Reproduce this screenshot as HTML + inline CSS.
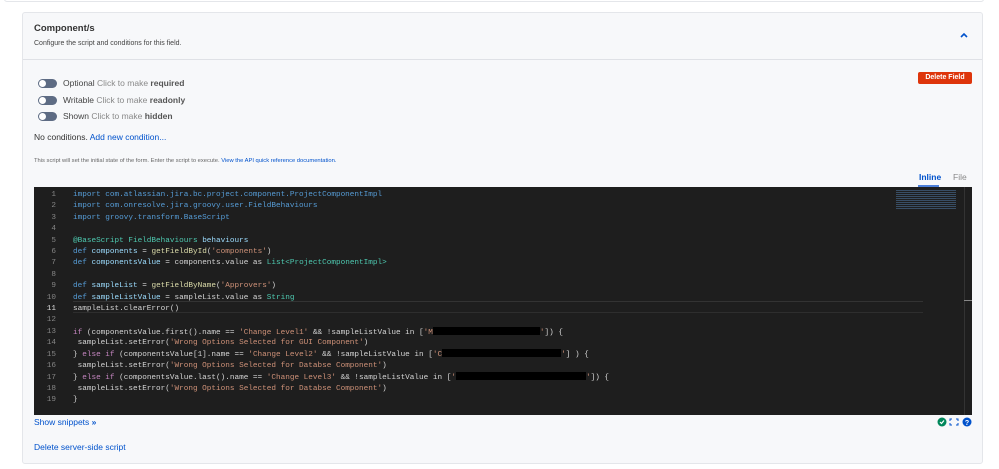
<!DOCTYPE html>
<html><head><style>
*{box-sizing:border-box;margin:0;padding:0}
body{width:999px;height:469px;background:#fff;font-family:"Liberation Sans",sans-serif;position:relative;overflow:hidden}
.outer{position:absolute;left:4px;top:-2px;width:980px;height:4px;border:1px solid #e4e6ea;border-top:none;border-radius:0 0 3px 3px}
.card{position:absolute;left:22px;top:12px;width:961px;height:452px;background:#f7f8fa;border:1px solid #e4e6ea;border-radius:3px}
.hd{height:47px;border-bottom:1px solid #dfe1e6}
.abs{position:absolute}
.t1{left:11px;top:10px;font-size:9.5px;font-weight:bold;color:#333}
.t2{left:11px;top:27px;font-size:7px;color:#444}
.tg{position:absolute;left:15px;width:19px;height:9px;border-radius:5px;background:#5e6c84}
.tg::after{content:"";position:absolute;left:1px;top:1px;width:7px;height:7px;border-radius:50%;background:#fff}
.lb{position:absolute;left:40px;font-size:8.5px;color:#444}
.lb span{color:#888}.lb b{color:#555}
a{color:#0052cc;text-decoration:none}
.ed{position:absolute;left:11px;top:174px;width:938px;height:228px;background:#1e1e1e;font-family:"Liberation Mono",monospace;font-size:7.7px;line-height:11.4px;color:#d4d4d4}
.ln{position:absolute;left:0;width:22px;text-align:right;color:#858585}
.cd{position:absolute;left:39px;white-space:pre}
.cd div{height:11.4px;overflow:visible}
.k{color:#569cd6}.s{color:#ce9178}.v{color:#9cdcfe}.ty{color:#4ec9b0}.f{color:#dcdcaa}.p{color:#c586c0}
.r{display:inline-block;background:#000;height:8px;vertical-align:-1px}
</style></head><body>
<div class="outer"></div>
<div class="card">
<div class="hd"></div>
<div class="abs t1">Component/s</div>
<div class="abs t2">Configure the script and conditions for this field.</div>
<svg class="abs" style="left:936px;top:18px" width="10" height="8"><path d="M2 6 L5 3 L8 6" stroke="#0052cc" stroke-width="1.6" fill="none"/></svg>
<div class="abs" style="left:895px;top:59px;width:54px;height:12px;background:#de350b;border-radius:2px;color:#fff;font-size:7px;font-weight:bold;text-align:center;line-height:12px">Delete Field</div>
<div class="tg" style="top:66px"></div><div class="lb" style="top:65px">Optional <span>Click to make </span><b>required</b></div>
<div class="tg" style="top:83px"></div><div class="lb" style="top:82px">Writable <span>Click to make </span><b>readonly</b></div>
<div class="tg" style="top:99px"></div><div class="lb" style="top:98px">Shown <span>Click to make </span><b>hidden</b></div>
<div class="abs" style="left:11px;top:119px;font-size:8.5px;color:#333">No conditions. <a>Add new condition...</a></div>
<div class="abs" style="left:11px;top:145px;font-size:5.8px;color:#666">This script will set the initial state of the form. Enter the script to execute. <a>View the API quick reference documentation.</a></div>
<div class="abs" style="left:896px;top:159px;font-size:8.5px;color:#0052cc;font-weight:bold">Inline</div>
<div class="abs" style="left:895px;top:172px;width:21px;height:2px;background:#4c7fd9"></div>
<div class="abs" style="left:930px;top:159px;font-size:8.5px;color:#888">File</div>
<div class="ed">
<div class="abs" style="left:39px;top:114px;width:850px;height:1px;background:#333"></div>
<div class="abs" style="left:39px;top:125px;width:850px;height:1px;background:#2e2e2e"></div>
<div class="abs" style="left:930px;top:0;width:1px;height:228px;background:#333"></div>
<div class="abs" style="left:930px;top:113px;width:8px;height:1px;background:#888"></div>
<div class="abs" style="left:862px;top:2px;width:60px;height:20px;background:repeating-linear-gradient(#1e1e1e 0 1px,#4a6d94 1px 2px);opacity:.6"></div>
<div class="ln" style="top:3px">1<br>2<br>3<br>4<br>5<br>6<br>7<br>8<br>9<br>10<br><span style="color:#ddd">11</span><br>12<br>13<br>14<br>15<br>16<br>17<br>18<br>19</div>
<div class="cd" style="top:3px"><div><span class="k">import com.atlassian.jira.bc.project.component.ProjectComponentImpl</span></div><div><span class="k">import com.onresolve.jira.groovy.user.FieldBehaviours</span></div><div><span class="k">import groovy.transform.BaseScript</span></div><div> </div><div><span class="ty">@BaseScript FieldBehaviours</span> <span class="v">behaviours</span></div><div><span class="k">def</span> <span class="v">components</span> = <span class="f">getFieldById</span>(<span class="s">'components'</span>)</div><div><span class="k">def</span> <span class="v">componentsValue</span> = components.value as <span class="ty">List&lt;ProjectComponentImpl&gt;</span></div><div> </div><div><span class="k">def</span> <span class="v">sampleList</span> = <span class="f">getFieldByName</span>(<span class="s">'Approvers'</span>)</div><div><span class="k">def</span> <span class="v">sampleListValue</span> = sampleList.value as <span class="ty">String</span></div><div>sampleList.clearError()</div><div> </div><div><span class="p">if</span> (componentsValue.first().name == <span class="s">'Change Level1'</span> &amp;&amp; !sampleListValue in [<span class="s">'M</span><span class="r" style="width:107px"></span><span class="s">'</span>]) {</div><div> sampleList.setError(<span class="s">'Wrong Options Selected for GUI Component'</span>)</div><div>} <span class="p">else if</span> (componentsValue[1].name == <span class="s">'Change Level2'</span> &amp;&amp; !sampleListValue in [<span class="s">'C</span><span class="r" style="width:119px"></span><span class="s">'</span>] ) {</div><div> sampleList.setError(<span class="s">'Wrong Options Selected for Databse Component'</span>)</div><div>} <span class="p">else if</span> (componentsValue.last().name == <span class="s">'Change Level3'</span> &amp;&amp; !sampleListValue in [<span class="s">'</span><span class="r" style="width:130px"></span><span class="s">'</span>]) {</div><div> sampleList.setError(<span class="s">'Wrong Options Selected for Databse Component'</span>)</div><div>}</div></div>
</div>
<div class="abs" style="left:11px;top:404px;font-size:8.5px;color:#0052cc">Show snippets <b>»</b></div>
<svg class="abs" style="left:914px;top:404px" width="36" height="10"><circle cx="5" cy="5" r="4.5" fill="#00875a"/><path d="M3 5 L4.5 6.5 L7 3.5" stroke="#fff" stroke-width="1.2" fill="none"/><path d="M13 4V2h2M19 2h2v2M21 6v2h-2M15 8h-2V6" stroke="#0052cc" stroke-width="1" fill="none"/><circle cx="30" cy="5" r="4.5" fill="#0052cc"/><text x="30" y="8" font-size="7" fill="#fff" text-anchor="middle" font-family="Liberation Sans" font-weight="bold">?</text></svg>
<div class="abs" style="left:11px;top:429px;font-size:8.5px;color:#0052cc">Delete server-side script</div>
</div>
</body></html>
